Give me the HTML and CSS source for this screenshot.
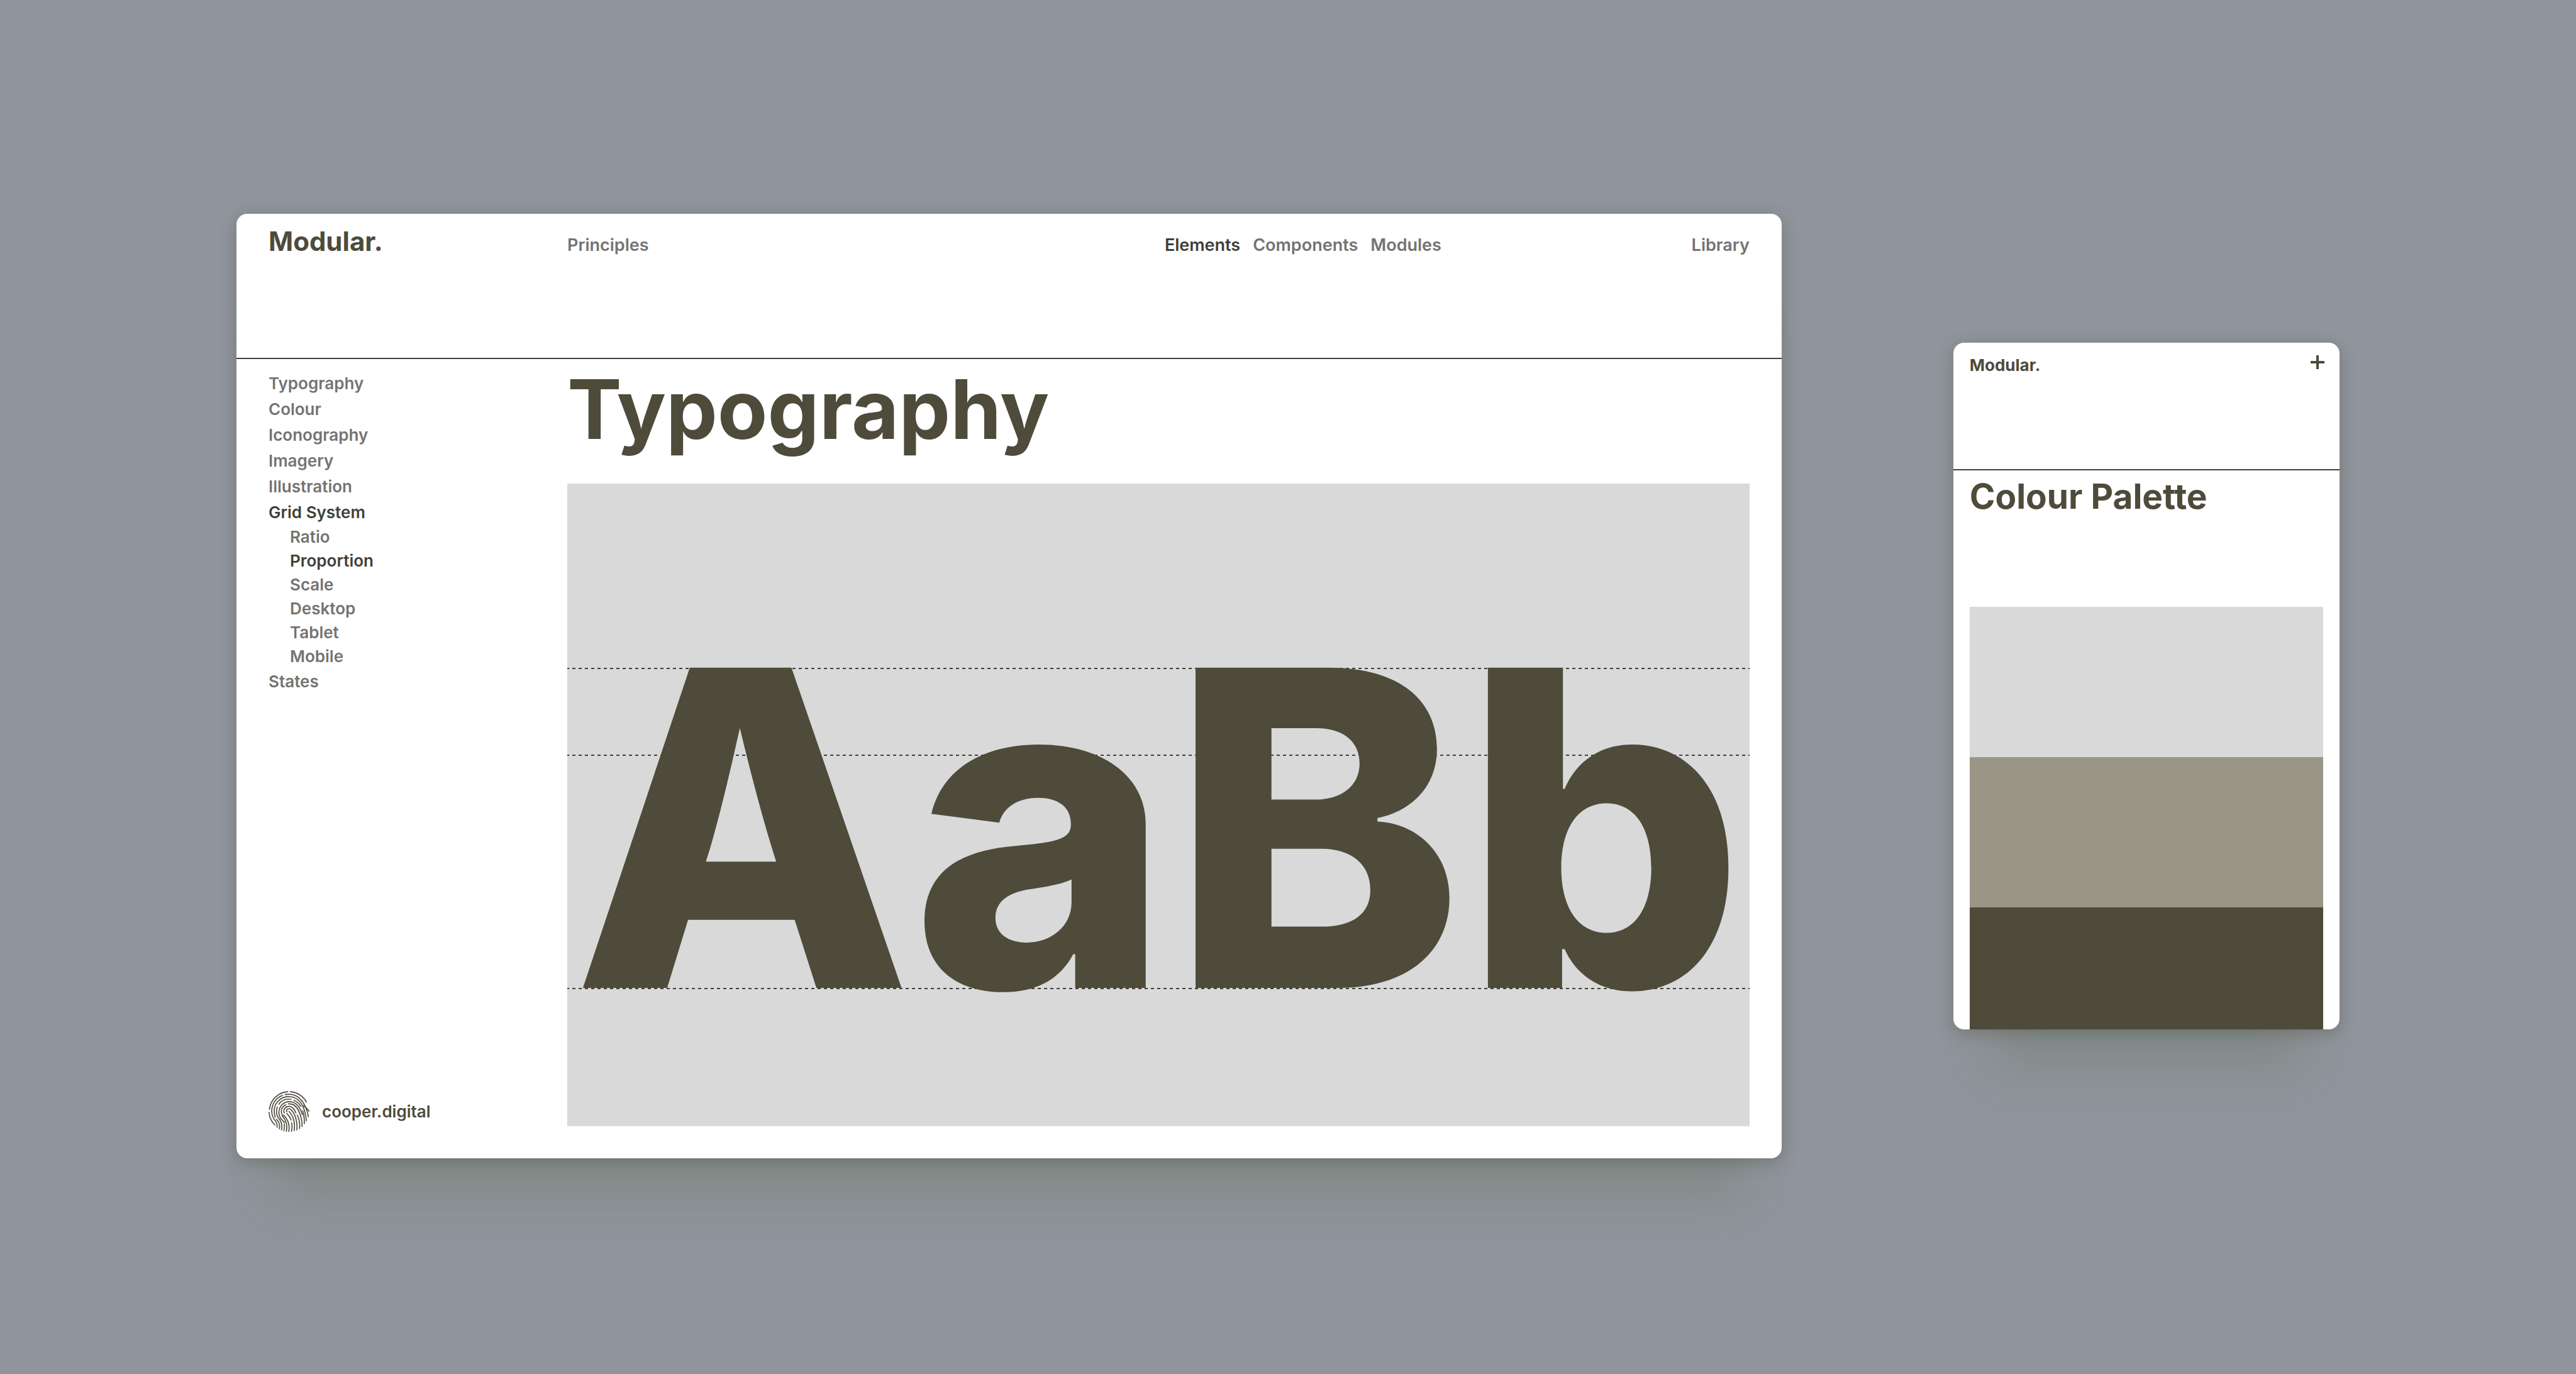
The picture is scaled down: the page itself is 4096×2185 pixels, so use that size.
FILE: index.html
```html
<!DOCTYPE html>
<html lang="en">
<head>
<meta charset="utf-8">
<title>Modular.</title>
<link rel="stylesheet" href="styles.css">
</head>
<body>
<main class="stage">
  <section class="card desktop">
    <header class="desktop-header">
      <a class="brand brand-large" href="#">Modular.</a>
      <nav class="top-nav">
        <a href="#">Principles</a>
        <div class="nav-group">
          <a class="active" href="#">Elements</a>
          <a href="#">Components</a>
          <a href="#">Modules</a>
          <a class="nav-end" href="#">Library</a>
        </div>
      </nav>
    </header>
    <div class="desktop-body">
      <aside class="sidebar">
        <ul class="menu">
          <li><a href="#">Typography</a></li>
          <li><a href="#">Colour</a></li>
          <li><a href="#">Iconography</a></li>
          <li><a href="#">Imagery</a></li>
          <li><a href="#">Illustration</a></li>
          <li><a class="active" href="#">Grid System</a>
            <ul class="submenu">
              <li><a href="#">Ratio</a></li>
              <li><a class="active" href="#">Proportion</a></li>
              <li><a href="#">Scale</a></li>
              <li><a href="#">Desktop</a></li>
              <li><a href="#">Tablet</a></li>
              <li><a href="#">Mobile</a></li>
            </ul>
          </li>
          <li><a href="#">States</a></li>
        </ul>
        <a class="credit" href="#">
          <svg class="fingerprint" viewBox="18 18 230 230" aria-hidden="true">
            <path d="M23 121A111 111 0 0 1 127 22"/>
            <path d="M141 22A111 111 0 0 1 231 80"/>
            <path d="M21 139Q24 180 53 209"/>
            <path d="M97 43C55 58 35 95 36 135C37 166 50 178 59 190Q68 204 66 222"/>
            <path d="M111 38C150 31 184 44 205 72C225 98 237 130 242 163"/>
            <path d="M213 100Q235 115 246 131"/>
            <path d="M55 165C44 125 50 90 80 67C112 43 155 45 184 67C214 92 226 140 231 185"/>
            <path d="M62 177C77 190 83 208 79 231"/>
            <path d="M145 64C112 60 89 72 76 92"/>
            <path d="M161 70Q188 82 200 105"/>
            <path d="M67 108C58 140 65 160 77 174C90 190 96 210 91 237"/>
            <path d="M210 130Q221 160 219 202"/>
            <path d="M89 175C75 157 73 135 82 112C94 85 126 71 155 81C184 92 202 125 208 151"/>
            <path d="M107 205Q109 224 104 241"/>
            <path d="M98 160C86 141 88 120 99 107Q107 98 117 95"/>
            <path d="M130 90C162 88 180 110 190 135C202 164 209 190 206 218"/>
            <path d="M90 177Q104 189 107 197M95 158C116 181 126 208 118 245"/>
            <path d="M106 142C99 119 115 103 134 104C155 106 164 120 172 141"/>
            <path d="M103 154C127 178 139 207 132 246"/>
            <path d="M179 153Q198 188 192 229"/>
            <path d="M121 135C114 120 133 112 145 124C166 144 183 190 177 237"/>
            <path d="M133 133C154 154 169 192 162 241"/>
            <path d="M121 145Q137 160 145 181"/>
            <path d="M148 197Q153 220 147 245"/>
          </svg>
          <span>cooper.digital</span>
        </a>
      </aside>
      <article class="content">
        <h1 class="title">Typography</h1>
        <div class="specimen">
          <span class="specimen-text">AaBb</span>
        </div>
      </article>
    </div>
  </section>

  <section class="card mobile">
    <header class="mobile-header">
      <a class="brand" href="#">Modular.</a>
      <button class="menu-button" type="button" aria-label="Open menu">
        <svg viewBox="0 0 22 22" aria-hidden="true"><path d="M11 0V22M0 11H22"/></svg>
      </button>
    </header>
    <div class="mobile-body">
      <h2 class="mobile-title">Colour Palette</h2>
      <div class="palette">
        <div class="swatch swatch-light"></div>
        <div class="swatch swatch-mid"></div>
        <div class="swatch swatch-dark"></div>
      </div>
    </div>
  </section>
</main>
</body>
</html>
```

FILE: styles.css
```css
:root {
  --backdrop: #90949c;
  --olive: #4e4b3b;
  --ink: #403f38;
  --muted: #737373;
  --light: #d9d9d9;
  --mid: #999688;
}

* {
  box-sizing: border-box;
}

body {
  margin: 0;
  background: var(--backdrop);
  color: var(--olive);
  font: 600 26px/32px "Inter", "Liberation Sans", sans-serif;
}

h1,
h2,
ul {
  margin: 0;
  padding: 0;
  font-weight: 700;
}

ul {
  list-style: none;
  font-weight: 600;
}

a {
  color: var(--muted);
  text-decoration: none;
}

.active {
  color: var(--ink);
}

.stage {
  display: grid;
  grid-template-columns: 4fr 1fr;
  gap: 273px;
  align-items: center;
  min-height: 100vh;
  padding: 0 376px 3px;
}

.card {
  display: flex;
  flex-direction: column;
  border-radius: 17px;
  background: #fff;
  box-shadow:
    0 6px 24px rgba(70, 75, 55, 0.36),
    0 120px 70px -60px rgba(100, 115, 90, 0.3);
}

.desktop {
  min-height: 1502px;
}

.desktop-header,
.desktop-body {
  display: grid;
  grid-template-columns: 475px 1fr;
  padding: 0 51px;
}

.desktop-header {
  align-items: baseline;
  height: 231px;
  padding-top: 19px;
  border-bottom: 2px solid var(--ink);
}

.brand {
  color: var(--olive);
  font-weight: 700;
}

.brand-large {
  font-size: 42px;
  line-height: 50px;
}

.top-nav {
  display: grid;
  grid-template-columns: 1fr 1fr;
  gap: 20px;
  font-size: 27px;
}

.nav-group {
  display: flex;
  gap: 20px;
}

.nav-end {
  margin-left: auto;
}

.desktop-body {
  flex: 1;
  padding-bottom: 42px;
}

.sidebar {
  display: flex;
  flex-direction: column;
  justify-content: space-between;
  padding-top: 18px;
}

.menu {
  line-height: 41px;
}

.submenu {
  padding-left: 34px;
  line-height: 38px;
}

.menu a {
  display: block;
}

.credit {
  display: flex;
  align-items: center;
  gap: 20px;
  color: var(--olive);
}

.fingerprint {
  width: 65px;
  height: 65px;
  fill: none;
  stroke: var(--olive);
  stroke-width: 6;
  stroke-linecap: round;
}

.content {
  display: flex;
  flex-direction: column;
  padding-bottom: 9px;
}

.title {
  height: 198px;
  font-size: 130px;
  line-height: 160px;
}

/* Cap height, x-height and baseline guides run behind the letters. */
.specimen {
  --guide: repeating-linear-gradient(90deg, var(--ink) 0 5px, transparent 5px 10px);
  flex: 1;
  display: flex;
  justify-content: center;
  background:
    var(--guide) -2px 293px / 110% 2px no-repeat,
    var(--guide) -2px 431px / 110% 2px no-repeat,
    var(--guide) -2px 802px / 110% 2px no-repeat,
    var(--light);
}

.specimen-text {
  height: 1022px;
  font-size: 700px;
  font-weight: 800;
  line-height: 1096px;
}

.mobile {
  min-height: 1092px;
}

.mobile-header {
  display: flex;
  justify-content: space-between;
  align-items: flex-start;
  height: 203px;
  padding: 20px 24px 0 26px;
  border-bottom: 2px solid var(--ink);
}

.menu-button {
  padding: 0;
  border: 0;
  background: none;
}

.menu-button svg {
  display: block;
  width: 22px;
  height: 22px;
  stroke: var(--olive);
  stroke-width: 4;
}

.mobile-body {
  flex: 1;
  display: flex;
  flex-direction: column;
  padding: 8px 26px 0;
}

.mobile-title {
  height: 209px;
  font-size: 55px;
  line-height: 66px;
}

.palette {
  flex: 1;
  display: flex;
  flex-direction: column;
}

.swatch {
  height: 239px;
}

.swatch-light {
  background: var(--light);
}

.swatch-mid {
  background: var(--mid);
}

.swatch-dark {
  flex: 1;
  background: var(--olive);
}
```
